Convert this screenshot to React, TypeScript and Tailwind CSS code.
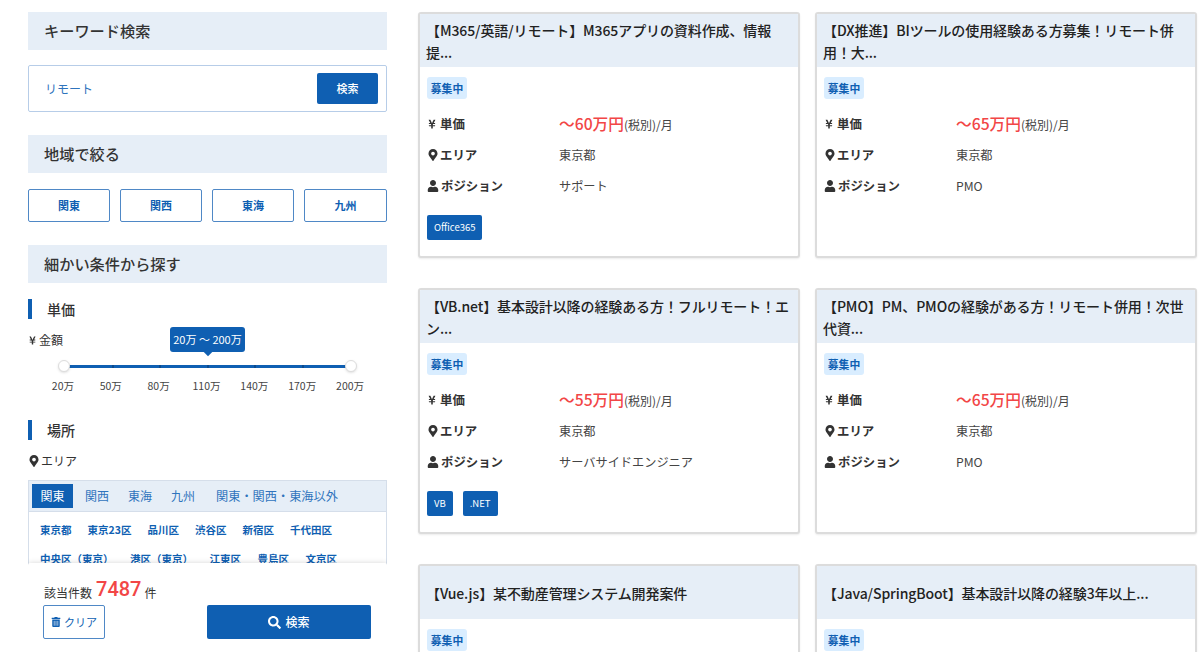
import { FaMapMarkerAlt, FaSearch, FaTrashAlt, FaUser, FaYenSign } from "react-icons/fa";

const jobs = [
  { title: "【M365/英語/リモート】M365アプリの資料作成、情報提...", price: "～60万円", position: "サポート", tags: ["Office365"] },
  { title: "【DX推進】BIツールの使用経験ある方募集！リモート併用！大...", price: "～65万円", position: "PMO", tags: [] },
  { title: "【VB.net】基本設計以降の経験ある方！フルリモート！エン...", price: "～55万円", position: "サーバサイドエンジニア", tags: ["VB", ".NET"] },
  { title: "【PMO】PM、PMOの経験がある方！リモート併用！次世代資...", price: "～65万円", position: "PMO", tags: [] },
  { title: "【Vue.js】某不動産管理システム開発案件", price: "", position: "", tags: [] },
  { title: "【Java/SpringBoot】基本設計以降の経験3年以上...", price: "", position: "", tags: [] },
];

const scale = ["20万", "50万", "80万", "110万", "140万", "170万", "200万"];
const prefsA = ["東京都", "東京23区", "品川区", "渋谷区", "新宿区", "千代田区"];
const prefsB = ["中央区（東京）", "港区（東京）", "江東区", "豊島区", "文京区"];

function SectionHead({ children }: { children: string }) {
  return (
    <div className="flex h-[38px] items-center bg-[#e6eef7] pl-4 text-[15.2px] font-medium leading-none text-[#333]">
      {children}
    </div>
  );
}

function SubHead({ children }: { children: string }) {
  return (
    <div className="flex h-[20px] items-center border-l-4 border-[#0f5fb2] pl-[15px] text-[14px] font-medium text-[#333]">
      {children}
    </div>
  );
}

function Sidebar() {
  return (
    <aside className="relative h-[652px] w-[359px] shrink-0 overflow-hidden pt-3">
      <SectionHead>キーワード検索</SectionHead>
      <div className="mt-[15px] flex h-[47px] items-center justify-between rounded-[2px] border border-[#b7cde8] pl-4 pr-2">
        <span className="text-[12px] text-[#2f74bd]">リモート</span>
        <button className="h-[31px] w-[61px] rounded-[2px] bg-[#0f5fb2] text-[11px] font-medium text-white">検索</button>
      </div>
      <div className="mt-[23px]">
        <SectionHead>地域で絞る</SectionHead>
      </div>
      <div className="mt-4 grid grid-cols-[82px_82px_82px_83px] gap-[10px]">
        {["関東", "関西", "東海", "九州"].map((r) => (
          <button key={r} className="h-[33px] rounded-[2px] border border-[#4f88c6] text-[11px] font-semibold text-[#0f5fb2]">
            {r}
          </button>
        ))}
      </div>
      <div className="mt-[23px]">
        <SectionHead>細かい条件から探す</SectionHead>
      </div>
      <div className="mt-4">
        <SubHead>単価</SubHead>
      </div>
      <div className="relative mt-[12px] h-[66px]">
        <div className="flex items-center gap-[2px] text-[12px] leading-[18px] text-[#333]">
          <FaYenSign className="size-[9px]" />
          <span>金額</span>
        </div>
        <div className="absolute left-[142px] top-[-4px] flex h-[25px] w-[75px] items-center justify-center rounded-[3px] bg-[#0f5fb2] text-[11px] text-white">
          20万 ～ 200万
          <span className="absolute bottom-[-3px] left-1/2 size-[6px] -translate-x-1/2 rotate-45 bg-[#0f5fb2]" />
        </div>
        <div className="absolute left-[36px] right-[36px] top-[34px] flex h-[3px] justify-between bg-[#0f5fb2]">
          {scale.map((s) => (
            <span key={s} className="h-[3px] w-[2px] bg-[#0b4a8e]" />
          ))}
        </div>
        <span className="absolute left-[30px] top-[29px] size-3 rounded-full border border-[#ddd] bg-white shadow-sm" />
        <span className="absolute left-[317px] top-[29px] size-3 rounded-full border border-[#ddd] bg-white shadow-sm" />
        <div className="absolute left-[11px] top-[47px] grid w-[335px] grid-cols-7 text-center text-[10.5px] leading-4 text-[#444]">
          {scale.map((s) => (
            <span key={s}>{s}</span>
          ))}
        </div>
      </div>
      <div className="mt-[23px]">
        <SubHead>場所</SubHead>
      </div>
      <div className="mt-3 flex items-center gap-[1px] text-[12px] leading-[18px] text-[#333]">
        <FaMapMarkerAlt className="size-3" />
        <span>エリア</span>
      </div>
      <div className="mt-[10px] border border-[#d5deea]">
        <div className="flex h-[31px] items-center gap-[11px] border-b border-[#d5deea] bg-[#e6eef7] pl-[3px] text-[12px] text-[#2f74bd]">
          <span className="flex h-6 w-[41px] items-center justify-center bg-[#0f5fb2] text-white">関東</span>
          <span className="ml-[1px]">関西</span>
          <span className="ml-[8px]">東海</span>
          <span className="ml-[8px]">九州</span>
          <span className="ml-[10px] text-[12.2px]">関東・関西・東海以外</span>
        </div>
        <div className="px-[11px] pt-[4px] text-[10.5px] font-bold text-[#0f5fb2]">
          <div className="flex h-[28px] items-center gap-4">
            {prefsA.map((p) => (
              <span key={p}>{p}</span>
            ))}
          </div>
          <div className="flex h-[30px] items-center gap-[16.5px]">
            {prefsB.map((p) => (
              <span key={p}>{p}</span>
            ))}
          </div>
        </div>
      </div>
      <div className="absolute bottom-0 left-0 right-0 top-[563px] rounded-t-[2px] bg-white pl-[15px] pr-4 shadow-[0_1px_6px_rgba(0,0,0,0.22)]">
        <div className="mt-[11px] flex h-[28px] items-end pl-px text-[12px] leading-[19px] text-[#333]">
          <span>該当件数</span>
          <span className="ml-[4px] mr-[3px] font-['Roboto',sans-serif] text-[20px] font-medium leading-[26px] text-[#f24646]">7487</span>
          <span>件</span>
        </div>
        <div className="mt-[3px] flex items-center justify-between">
          <button className="flex h-[34px] w-[62px] items-center justify-center gap-[3px] rounded-[2px] border border-[#4f88c6] text-[11px] text-[#0f5fb2]">
            <FaTrashAlt className="size-[10px]" />
            クリア
          </button>
          <button className="flex h-[34px] w-[164px] items-center justify-center gap-[4px] rounded-[2px] bg-[#0f5fb2] text-[12px] font-medium text-white">
            <FaSearch className="size-[13px]" />
            検索
          </button>
        </div>
      </div>
    </aside>
  );
}

function JobCard({ job }: { job: (typeof jobs)[number] }) {
  return (
    <article className="h-[246px] overflow-hidden rounded-[3px] border-2 border-[#dcdcdc] bg-white shadow-[0_1px_2px_rgba(0,0,0,0.08)]">
      <h2 className="flex h-[53px] items-center bg-[#e6eef7] pl-[6px] pr-1 text-[14px] font-medium leading-[22px] tracking-[-0.1px] text-[#222]">
        <span>{job.title}</span>
      </h2>
      <div className="px-[7px] pt-[10px]">
        <span className="flex h-[22px] w-10 items-center justify-center rounded-[3px] bg-[#d9edff] text-[10.8px] font-bold text-[#0f5fb2]">
          募集中
        </span>
        {job.price && (
          <>
            <dl className="mt-[9px] text-[12.2px] text-[#444]">
              <div className="grid h-[32px] grid-cols-[132px_1fr] items-center">
                <dt className="flex items-center gap-[3px] text-[12.4px] font-bold text-[#333]">
                  <FaYenSign className="size-[10px]" />
                  単価
                </dt>
                <dd>
                  <span className="text-[15.7px] font-medium text-[#f24646]">{job.price}</span>
                  <span className="text-[12px]">(税別)/月</span>
                </dd>
              </div>
              <div className="grid h-[31px] grid-cols-[132px_1fr] items-center">
                <dt className="flex items-center gap-[1px] text-[12.4px] font-bold text-[#333]">
                  <FaMapMarkerAlt className="size-3" />
                  エリア
                </dt>
                <dd>東京都</dd>
              </div>
              <div className="grid h-[31px] grid-cols-[132px_1fr] items-center">
                <dt className="flex items-center gap-[2px] text-[12.4px] font-bold text-[#333]">
                  <FaUser className="size-3" />
                  ポジション
                </dt>
                <dd>{job.position}</dd>
              </div>
            </dl>
            <div className="mt-[13px] flex gap-[10px]">
              {job.tags.map((t) => (
                <span key={t} className="flex h-[25px] items-center rounded-[2px] bg-[#0f5fb2] px-[7px] text-[9.5px] text-white">
                  {t}
                </span>
              ))}
            </div>
          </>
        )}
      </div>
    </article>
  );
}

export default function App() {
  return (
    <div className="flex h-[652px] w-[1200px] gap-[31px] overflow-hidden bg-white pl-7 font-['Noto_Sans_CJK_JP','Noto_Sans',sans-serif]">
      <Sidebar />
      <main className="grid w-[779px] shrink-0 grid-cols-[382px_382px] content-start gap-x-[15px] gap-y-[30px] pt-3">
        {jobs.map((job) => (
          <JobCard key={job.title} job={job} />
        ))}
      </main>
    </div>
  );
}
